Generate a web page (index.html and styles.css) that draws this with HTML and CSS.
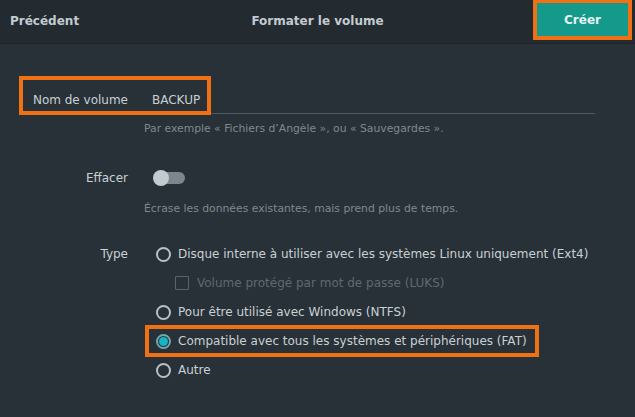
FILE: index.html
```html
<!DOCTYPE html>
<html lang="fr">
<head>
<meta charset="utf-8">
<link rel="stylesheet" href="styles.css">
</head>
<body>
<header class="header">
  <span class="back">Précédent</span>
  <span class="title">Formater le volume</span>
  <span class="create-wrap"><button class="create">Créer</button></span>
</header>
<main class="form">
  <div class="row row-name">
    <span class="label">Nom de volume</span>
    <div class="field">
      <div class="entry">BACKUP</div>
      <div class="hint">Par exemple « Fichiers d’Angèle », ou « Sauvegardes ».</div>
    </div>
    <div class="mark mark-name"></div>
  </div>
  <div class="row row-erase">
    <span class="label">Effacer</span>
    <div class="field">
      <div class="switch"><span class="knob"></span></div>
      <div class="hint">Écrase les données existantes, mais prend plus de temps.</div>
    </div>
  </div>
  <div class="row row-type">
    <span class="label">Type</span>
    <div class="field options">
      <div class="opt"><span class="radio"></span>Disque interne à utiliser avec les systèmes Linux uniquement (Ext4)</div>
      <div class="opt sub"><span class="check"></span>Volume protégé par mot de passe (LUKS)</div>
      <div class="opt"><span class="radio"></span>Pour être utilisé avec Windows (NTFS)</div>
      <div class="opt selected"><span class="radio on"></span>Compatible avec tous les systèmes et périphériques (FAT)</div>
      <div class="opt"><span class="radio"></span>Autre</div>
    </div>
  </div>
</main>
</body>
</html>
```
FILE: styles.css
```css
* { box-sizing: border-box; }
html, body { margin: 0; padding: 0; }
body {
  width: 635px;
  height: 417px;
  background: #283137;
  font-family: "DejaVu Sans", sans-serif;
  font-size: 12px;
  color: #c9d0d4;
  overflow: hidden;
}
.header {
  height: 44px;
  background: #232a30;
  border-bottom: 1px solid #20262b;
  display: flex;
  align-items: center;
  position: relative;
  font-weight: bold;
  color: #c3cbd0;
}
.back { margin-left: 10px; margin-top: -2px; }
.title {
  position: absolute;
  left: 0; right: 0;
  text-align: center;
  margin-top: -2px;
  pointer-events: none;
}
.create-wrap {
  margin-left: auto;
  margin-right: 3px;
  margin-top: -4px;
  border: 4px solid #f07114;
  display: flex;
}
.create {
  width: 91px;
  height: 33px;
  border: 0;
  background: #14998a;
  color: #e6f2f0;
  font-family: inherit;
  font-weight: bold;
  font-size: 12px;
  padding: 0 0 0 0;
}
.form {
  display: flex;
  flex-direction: column;
}
.row {
  display: grid;
  grid-template-columns: 128px 1fr;
  column-gap: 16px;
  position: relative;
}
.label { text-align: right; }
.row-name { margin-top: 48px; }
.row-name .label { line-height: 16px; margin-top: 0; }
.entry {
  width: 451px;
  height: 22px;
  padding-left: 8px;
  line-height: 16px;
  border-bottom: 1px solid #4d585f;
}
.hint {
  font-size: 10.8px;
  color: #7f898f;
  margin-top: 8px;
  line-height: 13px;
}
.mark {
  position: absolute;
  border: 4px solid #f07114;
  pointer-events: none;
}
.mark-name { left: 19px; top: -16px; width: 192px; height: 39px; }
.row-erase { margin-top: 35px; }
.row-erase .label { line-height: 16px; }
.switch {
  margin-left: 9px;
  width: 32px;
  height: 16px;
  position: relative;
  display: flex;
  align-items: center;
}
.switch::before {
  content: "";
  position: absolute;
  left: 3px; right: 0;
  height: 12px;
  border-radius: 6px;
  background: #7c868c;
}
.knob {
  position: relative;
  width: 16px; height: 16px;
  border-radius: 50%;
  background: #c4cbcf;
}
.row-erase .hint { margin-top: 16px; }
.row-type { margin-top: 31px; }
.row-type .label { line-height: 16px; }
.options { display: flex; flex-direction: column; gap: 13px; }
.opt {
  display: flex;
  align-items: center;
  height: 16px;
  margin-left: 12px;
  gap: 7px;
}
.radio {
  width: 15px; height: 15px;
  border-radius: 50%;
  border: 2px solid #b8c0c4;
  flex: none;
}
.radio.on {
  border: 2px solid #6fa7b0;
  background: #283137;
  display: flex;
  align-items: center;
  justify-content: center;
}
.radio.on::after {
  content: "";
  width: 9px; height: 9px;
  border-radius: 50%;
  background: #16b4c4;
}
.sub { margin-left: 31px; color: #5f696f; gap: 8px; }
.check {
  width: 14px; height: 14px;
  border: 1px solid #59636a;
  border-radius: 1px;
  flex: none;
}
.selected {
  outline: 4px solid #f07114;
  outline-offset: 0;
  margin-left: 5px;
  width: 386px;
  height: 24px;
  margin-top: -4px;
  margin-bottom: -4px;
  padding-left: 7px;
}
```
